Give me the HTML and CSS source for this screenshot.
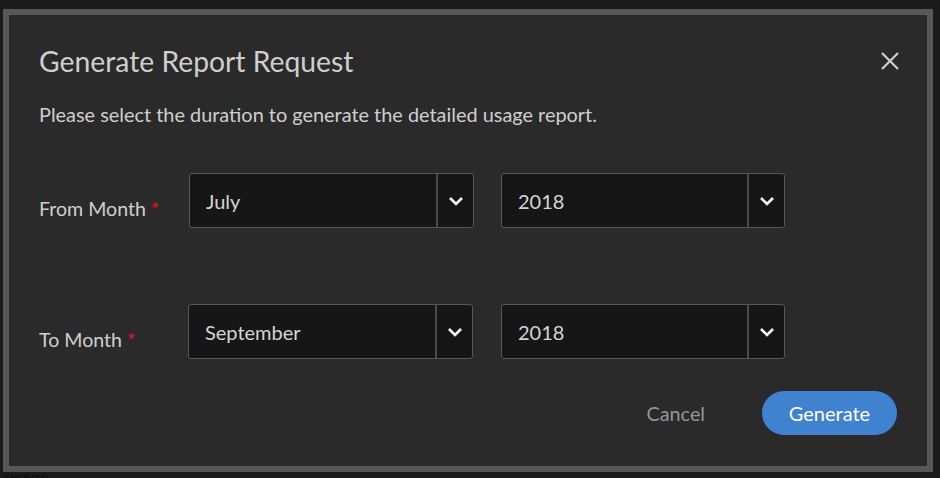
FILE: index.html
```html
<!DOCTYPE html>
<html lang="en">
<head>
<meta charset="utf-8">
<title>Generate Report Request</title>
<link rel="stylesheet" href="styles.css">
</head>
<body>
<div class="backdrop-text">usage</div>
<div class="dialog">
  <div class="dialog-header">
    <h1 class="dialog-title">Generate Report Request</h1>
    <button class="close-btn" aria-label="Close">
      <svg width="20" height="20" viewBox="0 0 20 20"><path d="M2 2 L18 18 M18 2 L2 18" stroke="#cfcfcf" stroke-width="2.2" fill="none"/></svg>
    </button>
  </div>
  <p class="dialog-desc">Please select the duration to generate the detailed usage report.</p>

  <div class="form-row row-from">
    <label class="field-label">From Month <span class="req">*</span></label>
    <div class="select sel-month">
      <span class="select-value">July</span>
      <span class="select-arrow"><svg width="16" height="10" viewBox="0 0 16 10"><path d="M2 2 L8 8 L14 2" stroke="#fff" stroke-width="2.6" fill="none"/></svg></span>
    </div>
    <div class="select sel-year">
      <span class="select-value">2018</span>
      <span class="select-arrow"><svg width="16" height="10" viewBox="0 0 16 10"><path d="M2 2 L8 8 L14 2" stroke="#fff" stroke-width="2.6" fill="none"/></svg></span>
    </div>
  </div>

  <div class="form-row row-to">
    <label class="field-label">To Month <span class="req">*</span></label>
    <div class="select sel-month">
      <span class="select-value">September</span>
      <span class="select-arrow"><svg width="16" height="10" viewBox="0 0 16 10"><path d="M2 2 L8 8 L14 2" stroke="#fff" stroke-width="2.6" fill="none"/></svg></span>
    </div>
    <div class="select sel-year">
      <span class="select-value">2018</span>
      <span class="select-arrow"><svg width="16" height="10" viewBox="0 0 16 10"><path d="M2 2 L8 8 L14 2" stroke="#fff" stroke-width="2.6" fill="none"/></svg></span>
    </div>
  </div>

  <div class="dialog-actions">
    <button class="btn-cancel">Cancel</button>
    <button class="btn-primary">Generate</button>
  </div>
</div>
</body>
</html>
```

FILE: styles.css
```css
html, body {
  margin: 0;
  padding: 0;
}
body {
  background: #1b1b1b;
  width: 940px;
  height: 478px;
  overflow: hidden;
  position: relative;
  font-family: "Source Sans Pro", Lato, "Noto Sans", sans-serif;
}
.backdrop-text {
  position: absolute;
  left: 4px;
  top: 466px;
  font-size: 18px;
  color: #0e0e0e;
}
.dialog {
  position: relative;
  margin: 9px 0 0 3px;
  width: 918px;
  height: 451px;
  border: 6px solid #575757;
  background: #2a2a2a;
  box-sizing: content-box;
  padding: 0;
}
.dialog-header {
  display: flex;
  align-items: center;
  justify-content: space-between;
  padding: 30px 27px 0 30px;
  height: 32px;
}
.dialog-title {
  margin: 0;
  font-weight: 400;
  font-size: 28.3px;
  color: #cfcfcf;
  line-height: 32px;
}
.close-btn {
  background: none;
  border: 0;
  padding: 0;
  width: 20px;
  height: 20px;
  display: flex;
  cursor: pointer;
}
.dialog-desc {
  margin: 25px 0 0 30px;
  font-size: 19.9px;
  line-height: 24px;
  color: #cfcfcf;
}
.form-row {
  display: flex;
  align-items: center;
  padding-left: 30px;
}
.row-from {
  margin-top: 47px;
}
.row-to {
  margin-top: 76px;
}
.field-label {
  width: 150px;
  font-size: 19.6px;
  color: #cfcfcf;
  padding-top: 16px;
}
.row-to .field-label {
  width: 149px;
}
.req {
  color: #e8141c;
}
.select {
  display: flex;
  height: 53px;
  border: 1px solid #575757;
  border-radius: 3px;
  background: #161616;
  box-sizing: content-box;
}
.sel-month {
  width: 283px;
  margin-right: 27px;
}
.row-to .sel-month {
  margin-right: 28px;
}
.sel-year {
  width: 282px;
}
.select-value {
  flex: 1;
  display: flex;
  align-items: center;
  padding-left: 16px;
  font-size: 20px;
  color: #d4d4d4;
}
.select-arrow {
  width: 35px;
  border-left: 2px solid #4a4a4a;
  display: flex;
  align-items: center;
  justify-content: center;
}
.dialog-actions {
  display: flex;
  justify-content: flex-end;
  align-items: center;
  padding-right: 30px;
  margin-top: 32px;
}
.btn-cancel {
  background: none;
  border: 0;
  font-family: inherit;
  font-size: 19.8px;
  color: #959595;
  padding: 0;
  margin-right: 57px;
}
.btn-primary {
  font-family: inherit;
  width: 135px;
  height: 44px;
  border: 0;
  border-radius: 22px;
  background: #3f82d0;
  color: #ffffff;
  font-size: 20px;
  padding: 0;
}
```
